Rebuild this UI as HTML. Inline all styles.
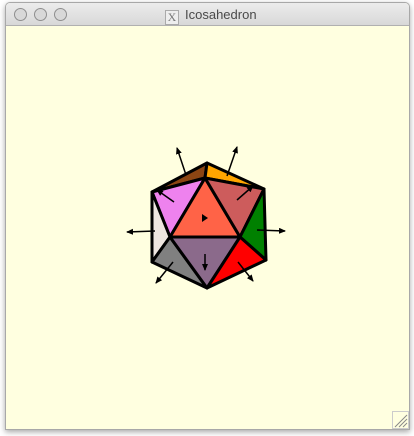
<!DOCTYPE html>
<html><head><style>
body{margin:0;width:414px;height:436px;background:#fff;overflow:hidden;font-family:"Liberation Sans",sans-serif;position:relative}
.win{position:absolute;left:5px;top:2px;width:403px;height:426px;border:1px solid #a8a8a8;border-radius:5px 5px 0 0;box-shadow:0 2px 6px rgba(0,0,0,.35);overflow:hidden;background:#ffffe0}
.tb{height:22px;background:linear-gradient(#ececec,#d8d8d8);border-bottom:1px solid #b0b0b0;position:relative}
.b{position:absolute;top:5px;width:11px;height:11px;border-radius:50%;background:#d8d8d8;border:1px solid #8f8f8f}
.t{position:absolute;left:159px;top:4px;font-size:13px;color:#4a4a4a}
.x{display:inline-block;width:12px;height:13px;border:1px solid #aaa;background:#eee;font-family:"Liberation Serif",serif;font-size:12px;line-height:13px;text-align:center;color:#777;margin-right:6px;vertical-align:-2px}
</style></head><body>
<div class="win">
<div class="tb">
<div class="b" style="left:8px"></div><div class="b" style="left:28px"></div><div class="b" style="left:48px"></div>
<div class="t"><span class="x">X</span>Icosahedron</div>
</div>
</div>
<svg width="414" height="436" style="position:absolute;left:0;top:0">
<defs><marker id="a" markerWidth="8" markerHeight="8" refX="6" refY="3" orient="auto" markerUnits="userSpaceOnUse"><path d="M0,0 L7,3 L0,6 z" fill="#000"/></marker></defs>
<g stroke="#000" stroke-width="3" stroke-linejoin="round">
<polygon points="152,192 207,163 205,178" fill="#8b4513"/>
<polygon points="207,163 264,189 205,178" fill="#ffa500"/>
<polygon points="152,192 205,178 170,237" fill="#ee82ee"/>
<polygon points="205,178 170,237 240,237" fill="#ff6347"/>
<polygon points="205,178 240,237 264,189" fill="#cd5c5c"/>
<polygon points="264,189 240,237 266,260" fill="#008000"/>
<polygon points="152,192 170,237 152,262" fill="#eee6e0"/>
<polygon points="152,262 170,237 207,288" fill="#808080"/>
<polygon points="170,237 240,237 207,288" fill="#8b6a8b"/>
<polygon points="240,237 266,260 207,288" fill="#ff0000"/>
</g>
<g stroke="#000" stroke-width="1.5" marker-end="url(#a)">
<line x1="186" y1="175" x2="177" y2="148"/>
<line x1="227" y1="176" x2="237" y2="147"/>
<line x1="174" y1="202" x2="157" y2="190"/>
<line x1="237" y1="200" x2="253" y2="186"/>
<line x1="155" y1="231" x2="127" y2="232"/>
<line x1="257" y1="230" x2="285" y2="231"/>
<line x1="173" y1="262" x2="156" y2="283"/>
<line x1="205" y1="254" x2="205" y2="270"/>
<line x1="238" y1="262" x2="253" y2="281"/>
</g>
<path d="M202,214 L208,218 L202,222 z" fill="#000"/>
<g stroke="#888" stroke-width="1"><line x1="395" y1="427" x2="407" y2="415"/><line x1="399" y1="427" x2="407" y2="419"/><line x1="403" y1="427" x2="407" y2="423"/></g>
<rect x="392.5" y="411.5" width="16" height="17" fill="none" stroke="#ccc"/>
</svg>
</body></html>
